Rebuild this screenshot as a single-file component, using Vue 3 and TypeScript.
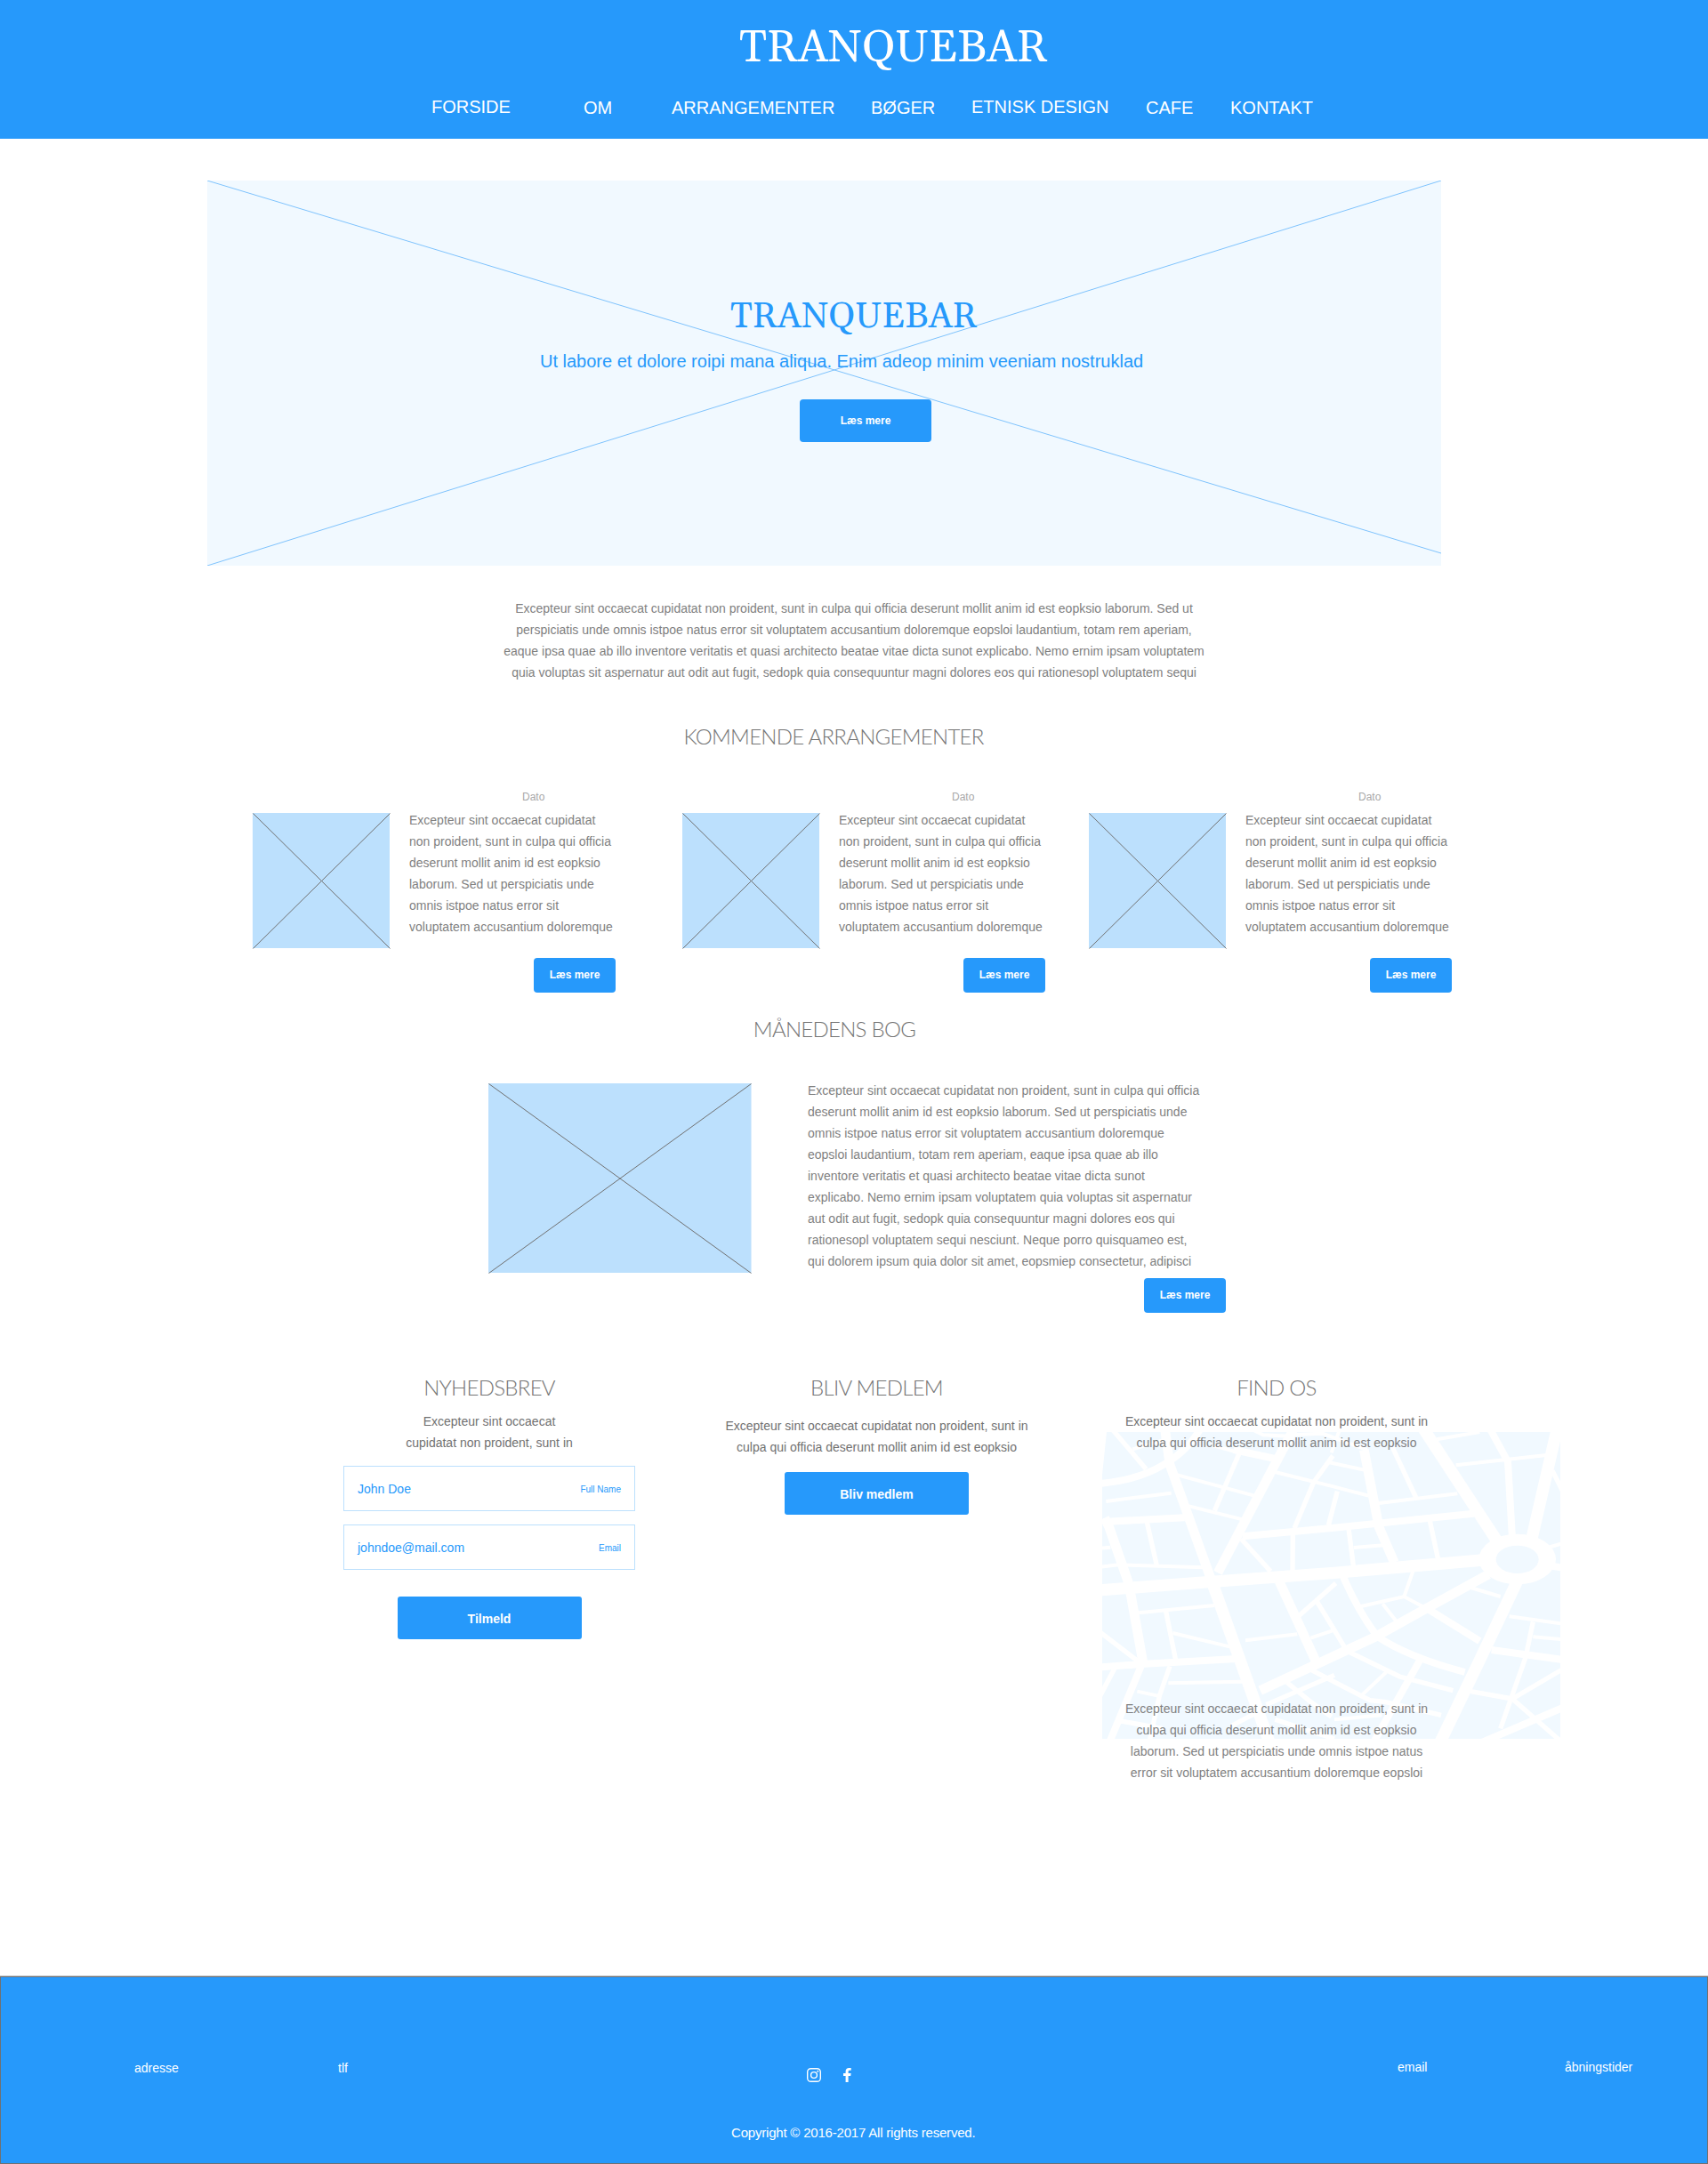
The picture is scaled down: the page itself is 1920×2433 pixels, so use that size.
<script setup lang="ts">
interface NavItem {
  label: string
  offset: number
  drop: number
}
interface Card {
  id: number
  gap: number
}

const nav: NavItem[] = [
  { label: 'FORSIDE', offset: 485, drop: 0 },
  { label: 'OM', offset: 656, drop: 1 },
  { label: 'ARRANGEMENTER', offset: 755, drop: 1 },
  { label: 'BØGER', offset: 979, drop: 1 },
  { label: 'ETNISK DESIGN', offset: 1092, drop: 0 },
  { label: 'CAFE', offset: 1288, drop: 1 },
  { label: 'KONTAKT', offset: 1383, drop: 1 },
]
const navColumns = nav
  .map((item, i) => `${(nav[i + 1]?.offset ?? 1920) - item.offset}px`)
  .join(' ')

const cards: Card[] = [
  { id: 1, gap: 74 },
  { id: 2, gap: 48 },
  { id: 3, gap: 0 },
]

const cardLines = [
  'Excepteur sint occaecat cupidatat',
  'non proident, sunt in culpa qui officia',
  'deserunt mollit anim id est eopksio',
  'laborum. Sed ut perspiciatis unde',
  'omnis istpoe natus error sit',
  'voluptatem accusantium doloremque',
]
const introLines = [
  'Excepteur sint occaecat cupidatat non proident, sunt in culpa qui officia deserunt mollit anim id est eopksio laborum. Sed ut',
  'perspiciatis unde omnis istpoe natus error sit voluptatem accusantium doloremque eopsloi laudantium, totam rem aperiam,',
  'eaque ipsa quae ab illo inventore veritatis et quasi architecto beatae vitae dicta sunot explicabo. Nemo ernim ipsam voluptatem',
  'quia voluptas sit aspernatur aut odit aut fugit, sedopk quia consequuntur magni dolores eos qui rationesopl voluptatem sequi',
]
const bookLines = [
  'Excepteur sint occaecat cupidatat non proident, sunt in culpa qui officia',
  'deserunt mollit anim id est eopksio laborum. Sed ut perspiciatis unde',
  'omnis istpoe natus error sit voluptatem accusantium doloremque',
  'eopsloi laudantium, totam rem aperiam, eaque ipsa quae ab illo',
  'inventore veritatis et quasi architecto beatae vitae dicta sunot',
  'explicabo. Nemo ernim ipsam voluptatem quia voluptas sit aspernatur',
  'aut odit aut fugit, sedopk quia consequuntur magni dolores eos qui',
  'rationesopl voluptatem sequi nesciunt. Neque porro quisquameo est,',
  'qui dolorem ipsum quia dolor sit amet, eopsmiep consectetur, adipisci',
]

/* Streets of the map, grouped by width */
const streets: { w: number; d: string[] }[] = [
  {
    w: 40,
    d: [
      'M40 774L425 745L840 715L1340 672',
      'M427 745L622 1290',
      'M1138 225L1400 625',
      'M1592 225L1500 625',
      'M1458 740L1330 1010L1195 1290',
    ],
  },
  {
    w: 32,
    d: [
      'M268 225L285 350L427 745',
      'M447 715L705 225',
      'M65 530L80 560L146 750',
      'M152 780L195 1020',
      'M650 735L785 1030',
      'M940 300L990 560L1042 680',
      'M590 1112L980 930L1150 835L1360 720',
    ],
  },
  {
    w: 24,
    d: [
      'M50 414Q180 402 265 350Q350 300 390 225',
      'M60 543L335 529',
      'M530 592L840 563L1310 515',
      'M50 1033L200 1022L510 1005',
      'M188 1030L80 1290',
      'M870 728Q920 845 985 930Q1090 1000 1280 1050',
      'M1128 1010L970 1290',
      'M1160 840L1330 945',
      'M1365 230L1425 340L1440 600',
      'M1370 975L1610 1008',
      'M1330 1290L1610 1170',
      'M1560 690L1610 698',
      'M500 300L640 330',
    ],
  },
  {
    w: 16,
    d: [
      'M90 230L205 365',
      'M520 310L436 505',
      'M835 320L770 410L705 565',
      'M700 580L699 710',
      'M525 600L625 710',
      'M715 865L845 750',
      'M208 545L241 690',
      'M272 845L305 1010',
      'M285 1030L250 1130L215 1290',
      'M50 915L180 1015',
      'M100 1035L50 1130',
      'M1035 290L1117 465',
      'M1162 540L1190 670',
      'M888 565L904 690',
      'M850 440L820 555',
      'M780 810L835 900L880 975',
      'M680 1085L760 1150L830 1200',
      'M757 1040L960 1145L1010 1150L1200 1195',
      'M885 980L1060 1065L1240 1112',
      'M1510 880L1485 1000L1400 1240',
      'M1440 1140L1610 1040',
      'M1440 1140L1600 1280',
      'M1300 1115L1440 1140',
      'M1575 370L1610 440',
      'M610 1160L840 1060',
      'M495 1230L590 1180',
      'M640 1210L840 1275',
      'M120 1215L260 1240',
    ],
  },
  {
    w: 12,
    d: [
      'M70 474L290 446',
      'M300 382L570 455',
      'M350 490L530 535',
      'M640 375L840 425L955 455',
      'M50 632L85 629',
      'M50 695L110 688L400 697',
      'M180 850L435 825',
      'M295 918L490 965',
      'M540 943L715 922',
      'M760 935L840 908',
      'M280 1087L530 1082',
      'M175 1115L245 1130',
      'M160 298L280 262',
      'M430 285L500 305',
      'M550 225L600 250L700 255',
      'M690 250L800 245L950 300',
      'M820 342L940 368',
      'M830 310L860 225',
      'M990 480L1255 448',
      'M905 630L1015 621',
      'M1250 352L1555 318',
      'M930 828L1075 795L1155 838',
      'M1105 710L1075 795',
      'M1003 820L1050 880',
      'M1300 765L1400 795',
      'M1430 862L1605 886',
      'M1510 931L1605 939',
      'M1015 1050L930 1130',
      'M1560 630L1610 615',
      'M840 1210L1000 1195',
      'M1185 265L1330 240',
    ],
  },
]
</script>

<template>
  <div class="page">
    <header class="header">
      <h1 class="brand">TRANQUEBAR</h1>
      <nav class="nav" :style="{ gridTemplateColumns: navColumns }">
        <a v-for="n in nav" :key="n.label" :class="{ low: n.drop }">{{ n.label }}</a>
      </nav>
    </header>

    <section class="hero">
      <svg class="hero-cross" width="1387" height="433">
        <path d="M0 0L1387 419M0 433L1387 0" stroke="#7fc3fd" fill="none" />
      </svg>
      <h2 class="hero-title">TRANQUEBAR</h2>
      <p class="hero-sub">Ut labore et dolore roipi mana aliqua. Enim adeop minim veeniam nostruklad</p>
      <button class="btn hero-btn">Læs mere</button>
    </section>

    <div class="copy intro">
      <div v-for="l in introLines" :key="l">{{ l }}</div>
    </div>

    <h3 class="heading events-title">KOMMENDE ARRANGEMENTER</h3>

    <section class="cards">
      <article v-for="c in cards" :key="c.id" class="card" :style="{ marginRight: c.gap + 'px' }">
        <svg class="thumb" width="155" height="153">
          <rect width="154" height="152" fill="#bce0fd" />
          <path d="M.5 .5L154.5 152.5M.5 152.5L154.5 .5" stroke="#707070" fill="none" />
        </svg>
        <div class="card-body">
          <div class="date">Dato</div>
          <div class="copy card-copy">
            <div v-for="l in cardLines" :key="l">{{ l }}</div>
          </div>
          <button class="btn small">Læs mere</button>
        </div>
      </article>
    </section>

    <h3 class="heading book-title">MÅNEDENS BOG</h3>

    <section class="book">
      <svg class="book-img" width="297" height="214">
        <rect width="295.5" height="213" fill="#bce0fd" />
        <path d="M.5 .5L295.5 213.5M.5 213.5L295.5 .5" stroke="#707070" fill="none" />
      </svg>
      <div class="book-body">
        <div class="copy">
          <div v-for="l in bookLines" :key="l">{{ l }}</div>
        </div>
        <button class="btn small book-btn">Læs mere</button>
      </div>
    </section>

    <section class="bottom">
      <div class="col news">
        <h3 class="heading">NYHEDSBREV</h3>
        <div class="copy strong">
          <div>Excepteur sint occaecat</div>
          <div>cupidatat non proident, sunt in</div>
        </div>
        <div class="field first"><span>John Doe</span><small>Full Name</small></div>
        <div class="field"><span>johndoe@mail.com</span><small>Email</small></div>
        <button class="btn wide">Tilmeld</button>
      </div>
      <div class="col member">
        <h3 class="heading">BLIV MEDLEM</h3>
        <div class="copy strong">
          <div>Excepteur sint occaecat cupidatat non proident, sunt in</div>
          <div>culpa qui officia deserunt mollit anim id est eopksio</div>
        </div>
        <button class="btn wide">Bliv medlem</button>
      </div>
      <div class="col find">
        <svg class="map" width="515" height="345" viewBox="57 240 1545 1035">
          <rect x="57" y="240" width="1545" height="1035" fill="#f1f9ff" />
          <path d="M57 240H72L57 385Z" fill="#fff" />
          <g v-for="s in streets" :key="s.w" fill="none" stroke="#fff" :stroke-width="s.w">
            <path v-for="d in s.d" :key="d" :d="d" />
          </g>
          <ellipse cx="1457" cy="669" rx="130" ry="85" fill="#fff" />
          <ellipse cx="1457" cy="670" rx="72" ry="47" fill="#f1f9ff" />
        </svg>
        <h3 class="heading">FIND OS</h3>
        <div class="copy">
          <div class="strong">Excepteur sint occaecat cupidatat non proident, sunt in</div>
          <div>culpa qui officia deserunt mollit anim id est eopksio</div>
        </div>
        <div class="copy find-more">
          <div>Excepteur sint occaecat cupidatat non proident, sunt in</div>
          <div>culpa qui officia deserunt mollit anim id est eopksio</div>
          <div>laborum. Sed ut perspiciatis unde omnis istpoe natus</div>
          <div>error sit voluptatem accusantium doloremque eopsloi</div>
        </div>
      </div>
    </section>

    <footer class="footer">
      <div class="links">
        <span class="adr">adresse</span>
        <span class="tlf">tlf</span>
        <span class="social">
          <svg width="16" height="16" viewBox="0 0 16 16" fill="none" stroke="#fff" stroke-width="1.4">
            <rect x=".7" y=".7" width="14.6" height="14.6" rx="3.9" />
            <circle cx="8" cy="8" r="3.4" />
            <circle cx="12.3" cy="3.7" r="1" fill="#fff" stroke="none" />
          </svg>
          <svg width="9" height="16" viewBox="0 0 9 16" fill="#fff">
            <path d="M2.6 16V8.9H0V6h2.6V3.9C2.6 1.4 4.1 0 6.4 0 7.5 0 8.4.1 8.7.1v2.7H7.1C5.9 2.8 5.6 3.4 5.6 4.200V6h3l-.4 2.900H5.600V16Z" />
          </svg>
        </span>
        <span class="mail">email</span>
        <span class="hours">åbningstider</span>
      </div>
      <p class="copyright">Copyright © 2016-2017 All rights reserved.</p>
    </footer>
  </div>
</template>

<style>
body {
  margin: 0;
  background: #fff;
}
</style>

<style scoped>
.page {
  width: 1920px;
  height: 2433px;
  display: flex;
  flex-direction: column;
  overflow: hidden;
  background: #fff;
  font-family: 'Liberation Sans', Arial, sans-serif;
}
h1,
h2,
h3,
p {
  margin: 0;
  font-weight: 400;
  white-space: nowrap;
}
.header {
  height: 156px;
  background: #2699fb;
  color: #fff;
  flex: none;
}
.brand,
.hero-title {
  font-family: Georgia, Gelasio, 'Liberation Serif', serif;
}
.brand {
  font-size: 50px;
  line-height: 60px;
  padding: 25px 0 0 831px;
}
.nav {
  display: grid;
  padding: 24px 0 0 485px;
  font-size: 20px;
  line-height: 22px;
  white-space: nowrap;
}
.nav .low {
  padding-top: 1px;
}
.hero {
  position: relative;
  width: 1387px;
  height: 433px;
  margin: 47px 0 0 233px;
  background: #f1f9ff;
  color: #2699fb;
  flex: none;
  display: flex;
  flex-direction: column;
  align-items: flex-start;
}
.hero-cross {
  position: absolute;
  inset: 0;
}
.hero > :not(svg) {
  position: relative;
}
.hero-title {
  font-size: 40px;
  line-height: 48px;
  margin: 130px 0 0 588px;
}
.hero-sub {
  font-size: 20px;
  line-height: 24px;
  margin: 13px 0 0 374px;
}
.btn {
  display: block;
  border: 0;
  padding: 0;
  border-radius: 4px;
  background: #2699fb;
  color: #fff;
  font: bold 12px 'Liberation Sans', Arial, sans-serif;
}
.hero-btn {
  width: 148px;
  height: 48px;
  margin: 31px 0 0 666px;
}
.copy {
  font-size: 14px;
  line-height: 24px;
  color: #7f7f7f;
  white-space: nowrap;
}
.copy.strong,
.strong {
  color: #717171;
}
.intro {
  margin-top: 36px;
  text-align: center;
}
.heading {
  font-family: Lato, sans-serif;
  font-weight: 300;
  font-size: 24px;
  line-height: 30px;
  letter-spacing: -0.72px;
  color: #747474;
  text-align: center;
}
.events-title {
  margin-top: 45px;
  width: 1874px;
}
.cards {
  display: flex;
  margin: 43px 0 0 284px;
  height: 232px;
  flex: none;
}
.card {
  display: flex;
  flex: none;
}
.thumb {
  margin-top: 28px;
  flex: none;
}
.card-body {
  width: 233px;
  padding-left: 21px;
  display: flex;
  flex-direction: column;
}
.date {
  font-size: 12px;
  line-height: 16px;
  color: #a8a8a8;
  padding: 2px 0 0 127px;
}
.card-copy {
  margin-top: 6px;
}
.small {
  width: 92px;
  height: 39px;
  padding-bottom: 1px;
  flex: none;
}
.card .small {
  margin: 23px 0 0 140px;
}
.book-title {
  margin-top: 24px;
  width: 1876px;
}
.book {
  display: flex;
  margin: 42px 0 0 549px;
  height: 265px;
  flex: none;
}
.book-img {
  margin-top: 4px;
  flex: none;
}
.book-body {
  margin-left: 62px;
}
.book-btn {
  margin: 7px 0 0 378px;
}
.bottom {
  display: flex;
  margin: 66px 0 0 386px;
  height: 676px;
  flex: none;
}
.col {
  display: flex;
  flex-direction: column;
  align-items: center;
  text-align: center;
}
.news {
  width: 328px;
}
.news .copy {
  margin-top: 11px;
}
.field {
  box-sizing: border-box;
  width: 328px;
  height: 51px;
  border: 1.5px solid #bce0fd;
  margin-top: 15px;
  padding: 0 15px;
  display: flex;
  align-items: center;
  justify-content: space-between;
  color: #2699fb;
  font-size: 14px;
}
.field.first {
  margin-top: 14px;
}
.field small {
  font-size: 10px;
  padding-top: 2px;
}
.wide {
  width: 207px;
  height: 48px;
  padding-top: 1px;
  font-size: 14px;
  border-radius: 3px;
}
.news .wide {
  margin-top: 30px;
}
.member {
  margin-left: 101px;
  width: 341px;
}
.member .copy {
  margin-top: 16px;
}
.member .wide {
  margin-top: 16px;
}
.find {
  position: relative;
  margin-left: 83px;
  width: 515px;
}
.find .heading,
.find .copy {
  position: relative;
  width: 392px;
  align-self: flex-start;
}
.find .copy {
  margin-top: 11px;
}
.find .find-more {
  margin-top: 275px;
}
.map {
  position: absolute;
  left: 0;
  top: 65px;
}
.footer {
  box-sizing: border-box;
  height: 211px;
  margin-top: auto;
  flex: none;
  background: #2699fb;
  border: 1px solid #707070;
  color: #fff;
  font-size: 14px;
  box-shadow: 0 -1px #c4c8cc;
}
.links {
  display: flex;
  align-items: flex-start;
  height: 60px;
  margin-top: 93px;
  line-height: 16px;
}
.adr {
  width: 229px;
  margin-left: 150px;
}
.tlf {
  width: 527px;
}
.adr,
.tlf {
  padding-top: 1px;
}
.social {
  display: flex;
  gap: 25px;
  width: 664px;
  padding-top: 9px;
}
.mail {
  width: 188px;
}
.copyright {
  padding-left: 821px;
  margin-top: 13px;
  font-size: 15px;
  line-height: 18px;
  letter-spacing: -0.2px;
}
</style>
